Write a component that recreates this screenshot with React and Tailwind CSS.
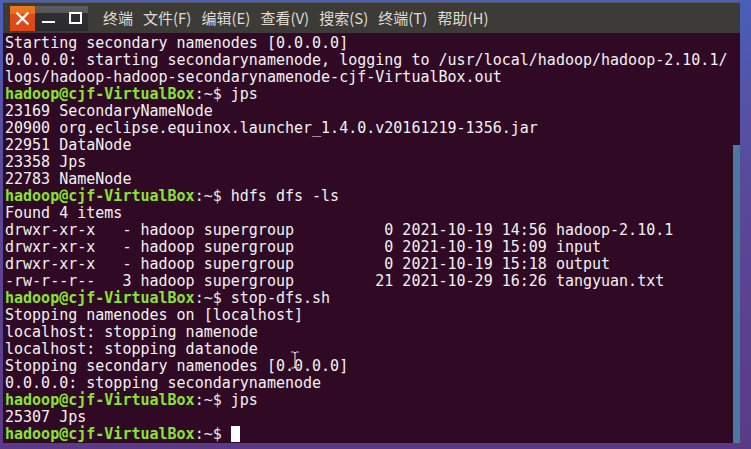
import React from 'react'

const menus = ['终端', '文件(F)', '编辑(E)', '查看(V)', '搜索(S)', '终端(T)', '帮助(H)']

const Prompt = ({ cmd }) => (
  <div>
    <span className="font-bold text-[#8ae234]">hadoop@cjf-VirtualBox</span>
    <span className="text-[#e6e6e6]">:~$ </span>
    {cmd}
  </div>
)

const Line = ({ children }) => <div>{children}</div>

export default function App() {
  return (
    <div className="relative w-[751px] h-[449px] overflow-hidden bg-[linear-gradient(180deg,#4a5fb8_0%,#5a4a9a_40%,#5a3a86_100%)]">
      <div className="absolute left-[3px] top-[2px] w-[737px] h-[440px] flex flex-col">
        {/* title bar */}
        <div className="h-[31px] flex items-center bg-[#3c3b37] border-t border-[#5a5955] shrink-0">
          <div className="ml-[7px] flex h-[25px] w-[78px]">
            <div className="w-[25px] h-full flex items-center justify-center bg-[linear-gradient(180deg,#e9791f_0%,#e7701d_30%,#df4c17_32%,#dd4814_100%)]">
              <svg width="13" height="13" viewBox="0 0 13 13">
                <path d="M1.5 1.5 L11.5 11.5 M11.5 1.5 L1.5 11.5" stroke="#fff" strokeWidth="2.4" strokeLinecap="square" />
              </svg>
            </div>
            <div className="flex-1 flex items-center bg-[linear-gradient(180deg,#5b5a5e_0%,#58575b_28%,#2f2e31_30%,#2a292c_100%)]">
              <div className="ml-[7px] mt-[8px] w-[13px] h-[2px] bg-white" />
              <div className="ml-[14px] w-[13px] h-[12px] border-2 border-white" />
            </div>
          </div>
          <div className="ml-[15px] flex gap-[10px] text-[15px] text-[#dfdbd2] font-['Noto_Sans_CJK_SC','Noto_Sans',sans-serif]">
            {menus.map((m, i) => (
              <span key={i}>{m}</span>
            ))}
          </div>
        </div>
        {/* terminal body */}
        <div className="relative flex-1 bg-[#300a24] flex">
          <div className="flex-1 pl-[2px] pt-[2px] whitespace-pre text-[15px] leading-[17px] text-[#f2f2f2] font-['DejaVu_Sans_Mono',monospace]">
            <Line>Starting secondary namenodes [0.0.0.0]</Line>
            <Line>0.0.0.0: starting secondarynamenode, logging to /usr/local/hadoop/hadoop-2.10.1/</Line>
            <Line>logs/hadoop-hadoop-secondarynamenode-cjf-VirtualBox.out</Line>
            <Prompt cmd="jps" />
            <Line>23169 SecondaryNameNode</Line>
            <Line>20900 org.eclipse.equinox.launcher_1.4.0.v20161219-1356.jar</Line>
            <Line>22951 DataNode</Line>
            <Line>23358 Jps</Line>
            <Line>22783 NameNode</Line>
            <Prompt cmd="hdfs dfs -ls" />
            <Line>Found 4 items</Line>
            <Line>drwxr-xr-x   - hadoop supergroup          0 2021-10-19 14:56 hadoop-2.10.1</Line>
            <Line>drwxr-xr-x   - hadoop supergroup          0 2021-10-19 15:09 input</Line>
            <Line>drwxr-xr-x   - hadoop supergroup          0 2021-10-19 15:18 output</Line>
            <Line>-rw-r--r--   3 hadoop supergroup         21 2021-10-29 16:26 tangyuan.txt</Line>
            <Prompt cmd="stop-dfs.sh" />
            <Line>Stopping namenodes on [localhost]</Line>
            <Line>localhost: stopping namenode</Line>
            <Line>localhost: stopping datanode</Line>
            <Line>Stopping secondary namenodes [0.0.0.0]</Line>
            <Line>0.0.0.0: stopping secondarynamenode</Line>
            <Prompt cmd="jps" />
            <Line>25307 Jps</Line>
            <Prompt cmd={<span className="inline-block w-[9px] h-[16px] bg-white align-[-3px]" />} />
          </div>
          {/* scrollbar */}
          <div className="w-[7px] flex flex-col">
            <div className="h-[112px]" />
            <div className="flex-1 bg-[#4a7aa2]" />
          </div>
          {/* mouse I-beam */}
          <svg className="absolute left-[287px] top-[318px]" width="10" height="18" viewBox="0 0 10 18">
            <path d="M1 1 H4 M6 1 H9 M5 2 V16 M1 17 H4 M6 17 H9 M4 1.5 L5 2.5 L6 1.5 M4 16.5 L5 15.5 L6 16.5" stroke="#fff" strokeWidth="1.2" fill="none" />
            <path d="M1 1 H4 M6 1 H9 M5 2 V16 M1 17 H4 M6 17 H9" stroke="#000" strokeWidth="0.4" fill="none" />
          </svg>
        </div>
      </div>
    </div>
  )
}
